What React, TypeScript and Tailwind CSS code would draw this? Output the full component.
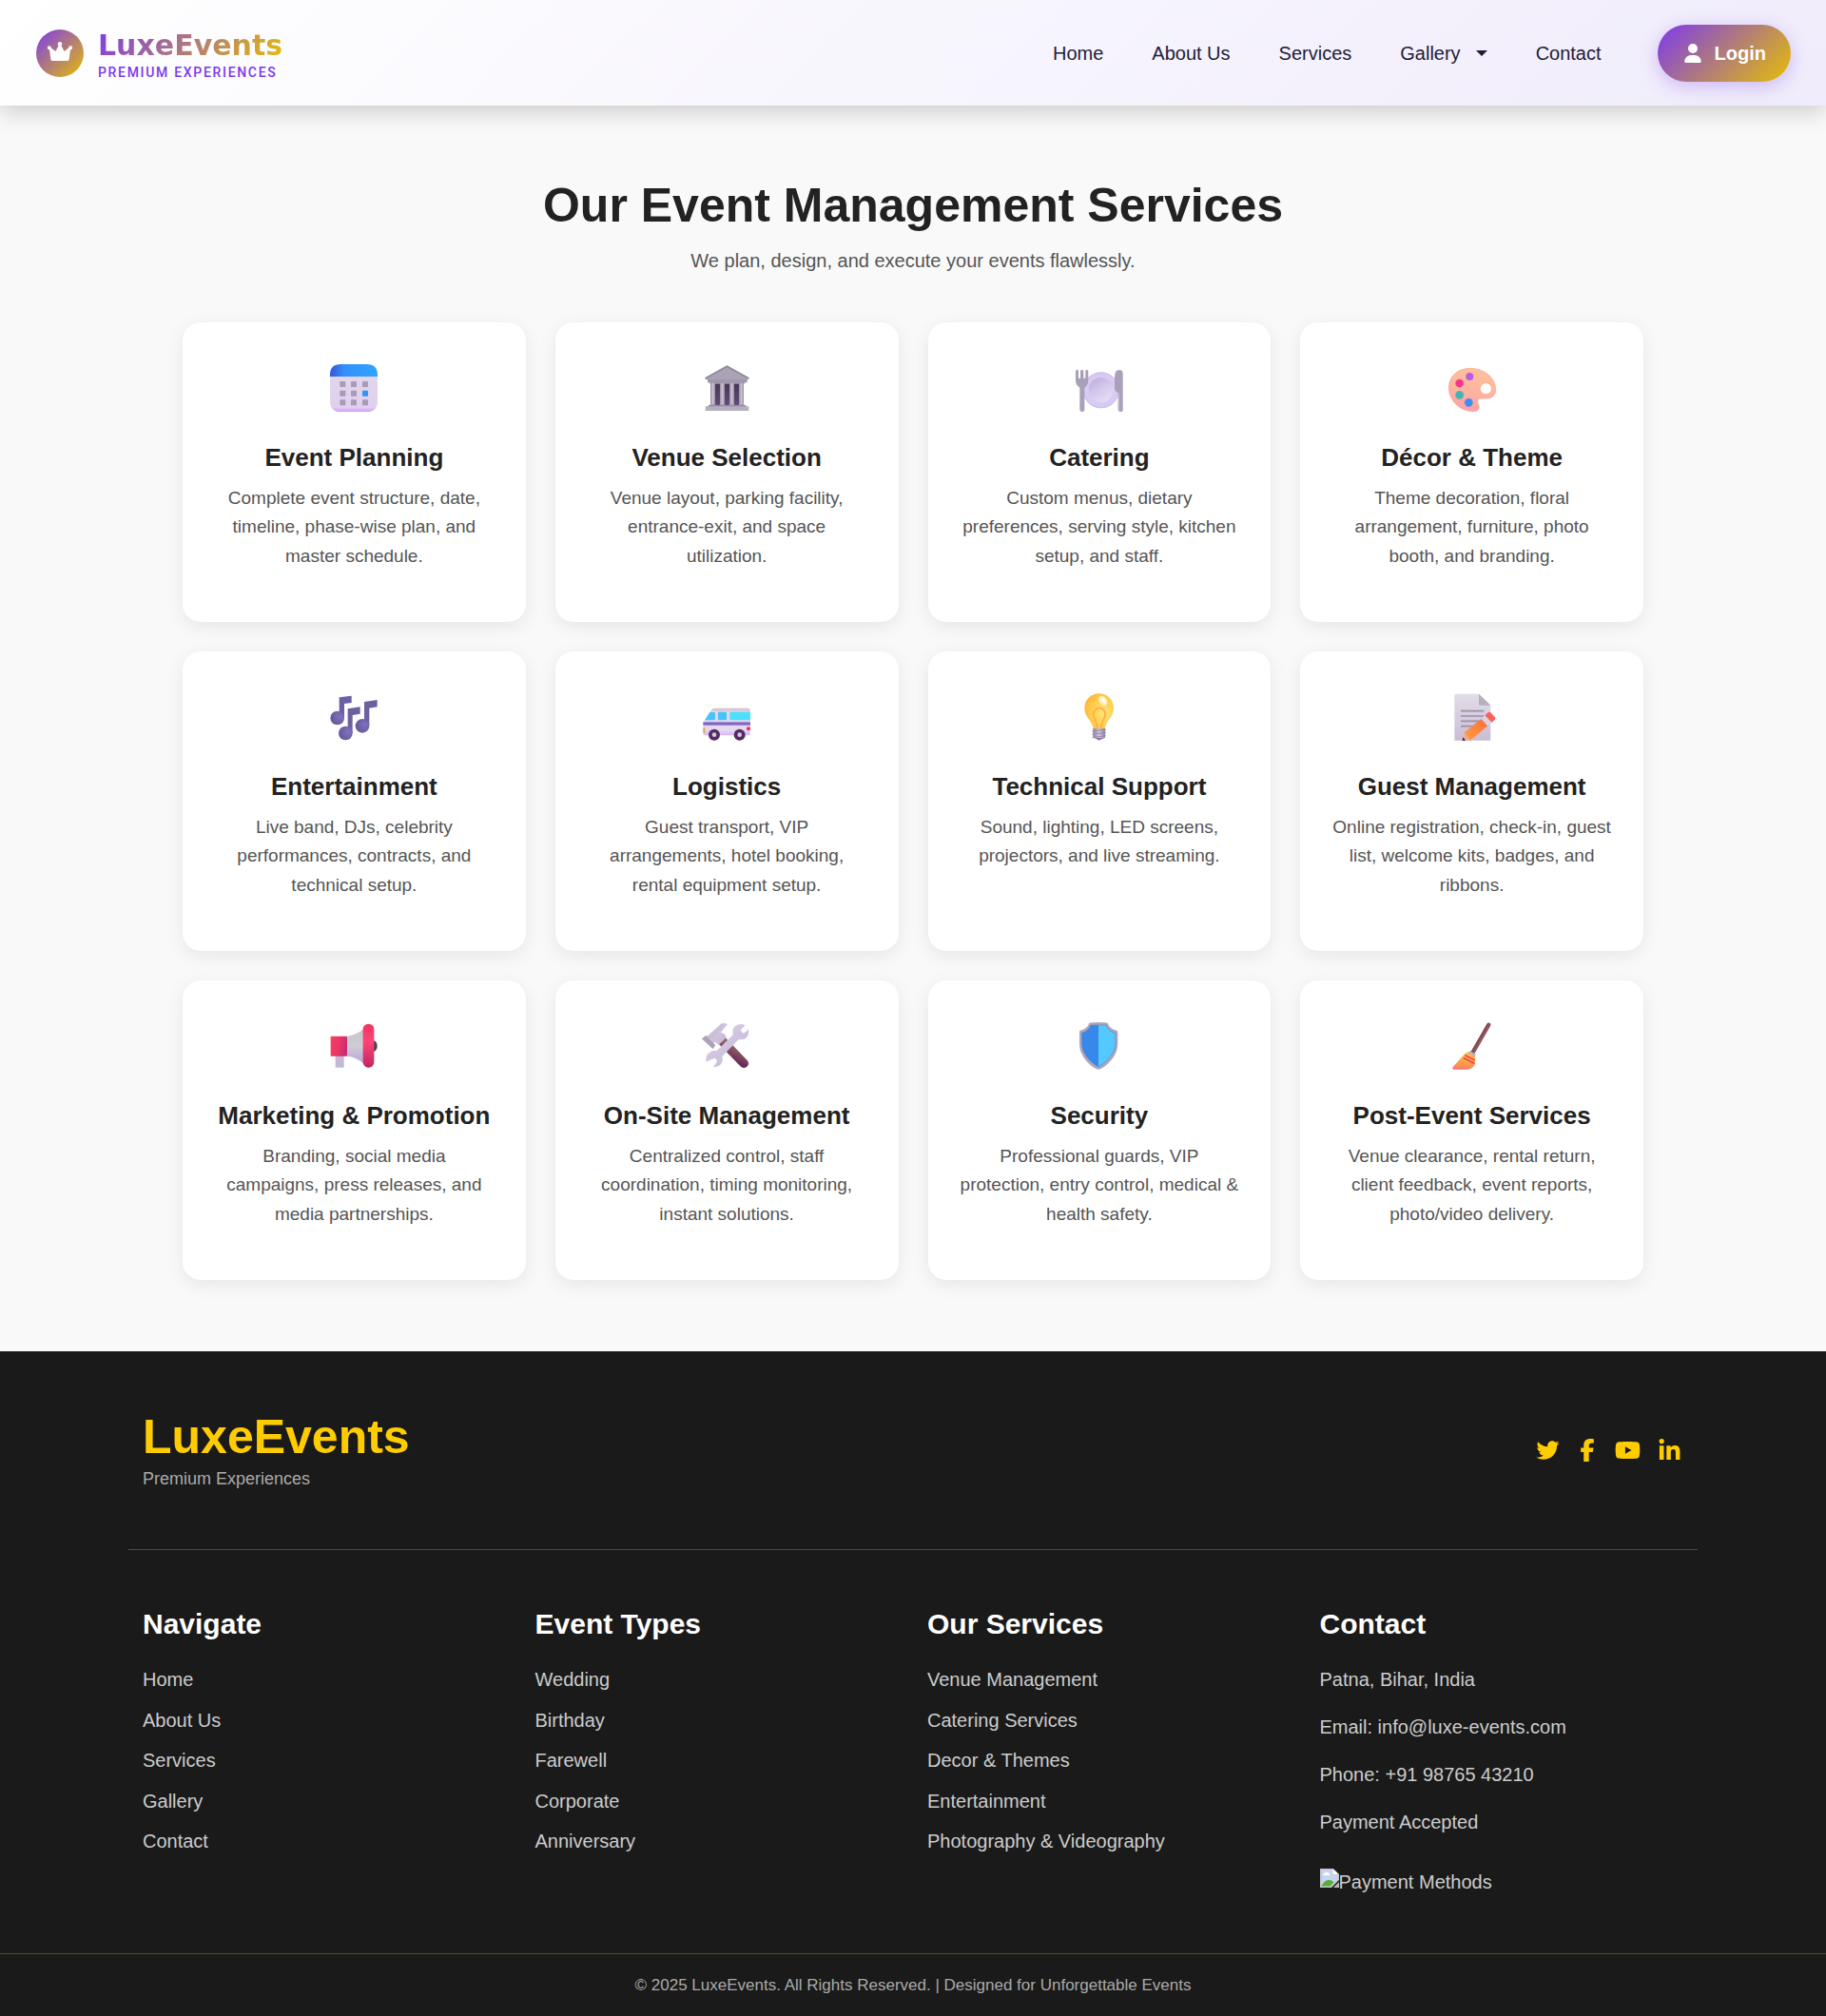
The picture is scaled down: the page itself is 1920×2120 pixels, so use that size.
import React from "react";
import { FaFacebookF, FaLinkedinIn, FaTwitter, FaYoutube, FaUser } from "react-icons/fa6";

type IconProps = { children: React.ReactNode };

function Emoji({ children }: IconProps) {
  return (
    <svg viewBox="0 0 150 150" className="block size-[50px] overflow-visible" aria-hidden="true">
      {children}
    </svg>
  );
}

function CalendarIcon() {
  const xs = [31, 66, 102];
  const ys = [54, 83, 112];
  return (
    <Emoji>
      <defs>
        <linearGradient id="cal-top" x1="0" y1="0" x2="1" y2="0">
          <stop offset="0" stopColor="#3556d6" />
          <stop offset="0.3" stopColor="#3390fb" />
          <stop offset="1" stopColor="#2ea5ff" />
        </linearGradient>
        <linearGradient id="cal-body" x1="0" y1="0" x2="0" y2="1">
          <stop offset="0" stopColor="#e0d6ea" />
          <stop offset="0.88" stopColor="#e0d0f0" />
          <stop offset="1" stopColor="#cf9cf5" />
        </linearGradient>
      </defs>
      <path d="M0 36H150V116Q150 150 116 150H34Q0 150 0 116Z" fill="url(#cal-body)" />
      <path d="M0 39V34Q0 0 34 0H116Q150 0 150 34V39Z" fill="url(#cal-top)" />
      {ys.map((y, r) =>
        xs.map((x, c) => (
          <rect key={`${r}-${c}`} x={x} y={y} width="18" height="18" rx="2" fill={r === 1 && c === 2 ? "#2f94f5" : "#a79bb5"} />
        )),
      )}
    </Emoji>
  );
}

function MuseumIcon() {
  return (
    <Emoji>
      <defs>
        <linearGradient id="mus-col" x1="0" y1="0" x2="1" y2="0">
          <stop offset="0" stopColor="#978da3" />
          <stop offset="0.5" stopColor="#c9c2d2" />
          <stop offset="1" stopColor="#978da3" />
        </linearGradient>
        <linearGradient id="mus-dark" x1="0" y1="0" x2="0" y2="1">
          <stop offset="0" stopColor="#43384f" />
          <stop offset="1" stopColor="#654a7c" />
        </linearGradient>
      </defs>
      <rect x="26" y="56" width="102" height="76" fill="url(#mus-dark)" />
      <path d="M76 4L145 42V48H8V42Z" fill="#aaa3b4" />
      <path d="M76 4L145 42V48L76 10L8 48V42Z" fill="#948a9f" />
      <path d="M15 48H140V58H132V62H22V58H15Z" fill="#a097ac" />
      {[24, 54, 84, 114].map((x) => (
        <g key={x}>
          <rect x={x} y="60" width="15" height="70" fill="url(#mus-col)" />
          <rect x={x - 1} y="126" width="17" height="5" fill="#a8a0b3" />
        </g>
      ))}
      <rect x="17" y="129" width="119" height="6" fill="#938a9f" />
      <rect x="8" y="133" width="137" height="14" rx="1" fill="#b4aebf" />
    </Emoji>
  );
}

function PlateIcon() {
  return (
    <Emoji>
      <defs>
        <linearGradient id="pl-in" x1="0.2" y1="0" x2="0.8" y2="1">
          <stop offset="0" stopColor="#c0aee0" />
          <stop offset="0.5" stopColor="#d6c9ee" />
          <stop offset="1" stopColor="#e6e0f2" />
        </linearGradient>
      </defs>
      <circle cx="80" cy="82" r="57" fill="#d8cbf3" />
      <circle cx="80" cy="82" r="55" fill="none" stroke="#cdbcec" strokeWidth="3" />
      <circle cx="80" cy="81" r="39" fill="url(#pl-in)" />
      <path
        d="M3 18Q9 16 9 22V44H15V22Q15 18 20 18Q25 18 25 22V44H31V22Q31 16 37 18Q40 19 40 24V52Q40 66 28 74V143Q28 150 20 150Q13 150 13 143V74Q0 66 0 52V22Q0 19 3 18Z"
        fill="#aaa0b9"
      />
      <path d="M149 146Q149 150 142 150Q134 150 134 144V90Q123 86 123 76V40Q123 18 138 18Q149 18 149 30Z" fill="#aaa0b9" />
      <path d="M134 90V144Q134 148 138 149V90Z" fill="#c2bacd" />
    </Emoji>
  );
}

function PaletteIcon() {
  return (
    <Emoji>
      <defs>
        <linearGradient id="pa" x1="0.6" y1="0" x2="0.4" y2="1">
          <stop offset="0" stopColor="#ffc09a" />
          <stop offset="0.5" stopColor="#fdb5a0" />
          <stop offset="1" stopColor="#ff9fa5" />
        </linearGradient>
      </defs>
      <path
        fillRule="evenodd"
        d="M68 13C112 13 149 42 149 80C149 98 138 108 118 108H104C91 108 89 116 95 127C100 138 95 149 80 149C36 149 1 114 1 74C1 38 30 13 68 13ZM118 59a18 18 0 1 0 0.1 0Z"
        fill="url(#pa)"
        stroke="#fba58e"
        strokeWidth="2"
      />
      <circle cx="67" cy="39" r="12" fill="#b95be8" />
      <circle cx="35" cy="60" r="13" fill="#f5368c" />
      <circle cx="35" cy="97" r="13" fill="#43b5b4" />
      <circle cx="64" cy="121" r="13" fill="#428cf5" />
    </Emoji>
  );
}

function NotesIcon() {
  return (
    <Emoji>
      <defs>
        <radialGradient id="note" cx="0.7" cy="0.4" r="0.7">
          <stop offset="0" stopColor="#8270c0" />
          <stop offset="1" stopColor="#665998" />
        </radialGradient>
      </defs>
      <g fill="#6d60a0">
        <path d="M29 13L68 8V30L45 33V78H29Z" />
        <path d="M56 49L95 43V65L71 69V126H56Z" />
        <path d="M108 27L149 21V43L124 47V103H108Z" />
      </g>
      <g fill="url(#note)">
        <circle cx="23" cy="78" r="22" />
        <circle cx="49" cy="126" r="22" />
        <circle cx="102" cy="103" r="22" />
      </g>
    </Emoji>
  );
}

function VanIcon() {
  return (
    <Emoji>
      <defs>
        <linearGradient id="van" x1="0" y1="0" x2="0" y2="1">
          <stop offset="0" stopColor="#c9bfcf" />
          <stop offset="0.15" stopColor="#e2d8e8" />
          <stop offset="0.8" stopColor="#e5d9f0" />
          <stop offset="1" stopColor="#d5b6f2" />
        </linearGradient>
      </defs>
      <path d="M36 47H140Q150 47 150 57V126Q150 133 142 133H8Q1 133 1 126V94L27 53Q31 47 36 47Z" fill="url(#van)" />
      <path d="M22 60H35Q39 60 39 64V81Q39 85 35 85H6Z" fill="#45c3fb" />
      <rect x="48" y="59" width="27" height="26" rx="4" fill="#45c3fb" />
      <path d="M89 59H150V85H89Q85 85 85 81V63Q85 59 89 59Z" fill="#4be0ff" />
      <rect x="1" y="91" width="149" height="10" fill="#8467c4" />
      <rect x="1" y="108" width="6" height="17" rx="3" fill="#e5a93c" />
      <circle cx="144" cy="112" r="6" fill="#f0265f" />
      {[36, 116].map((x) => (
        <g key={x}>
          <circle cx={x} cy="131" r="18" fill="#532a63" />
          <circle cx={x} cy="131" r="7" fill="#d6c9de" />
        </g>
      ))}
    </Emoji>
  );
}

function BulbIcon() {
  return (
    <Emoji>
      <defs>
        <radialGradient id="bulb" cx="0.65" cy="0.55" r="0.65">
          <stop offset="0" stopColor="#ffe477" />
          <stop offset="0.6" stopColor="#ffcf4d" />
          <stop offset="1" stopColor="#ffb73c" />
        </radialGradient>
        <radialGradient id="bulb-shine" cx="0.6" cy="0.5" r="0.6">
          <stop offset="0" stopColor="#ffffff" />
          <stop offset="1" stopColor="#ffe7a0" />
        </radialGradient>
        <linearGradient id="bulb-base" x1="0" y1="0" x2="1" y2="0">
          <stop offset="0" stopColor="#8e7ca0" />
          <stop offset="0.5" stopColor="#d3cadc" />
          <stop offset="1" stopColor="#8e7ca0" />
        </linearGradient>
      </defs>
      <path d="M74 1C100 1 120 21 120 47C120 76 96 84 92 112H56C52 84 28 76 28 47C28 21 48 1 74 1Z" fill="url(#bulb)" />
      <path d="M68 111Q68 92 60 80Q52 67 60 55Q67 46 75 46Q83 46 90 55Q97 67 89 80Q81 92 81 111" fill="none" stroke="#ffac4c" strokeWidth="5" />
      <ellipse cx="86" cy="24" rx="12" ry="17" transform="rotate(-35 86 24)" fill="url(#bulb-shine)" />
      <rect x="55" y="111" width="38" height="30" fill="url(#bulb-base)" />
      <path d="M52 120L96 114M52 130L96 124M53 140L95 134" stroke="#998bab" strokeWidth="3" />
      <path d="M57 141H90L84 145H80V148H68V145Z" fill="#8b74b0" />
    </Emoji>
  );
}

function MemoIcon() {
  return (
    <Emoji>
      <defs>
        <linearGradient id="memo" x1="0" y1="0" x2="0" y2="1">
          <stop offset="0" stopColor="#e3dce9" />
          <stop offset="1" stopColor="#cabdd6" />
        </linearGradient>
        <linearGradient id="pencil" x1="0" y1="1" x2="1" y2="0">
          <stop offset="0" stopColor="#ff9f42" />
          <stop offset="1" stopColor="#fb6f3c" />
        </linearGradient>
      </defs>
      <path d="M22 2H96L133 38V146Q133 149 130 149H22Q19 149 19 146V5Q19 2 22 2Z" fill="url(#memo)" />
      <path d="M96 2L133 38H99Q96 38 96 35Z" fill="#b7afbd" />
      <path d="M39 56H112M39 72H112M39 88H112M39 104H90" stroke="#9a90a3" strokeWidth="5" />
      <path d="M104 80L124 103L69 149L50 124Z" fill="url(#pencil)" />
      <path d="M50 124L69 149H44Z" fill="#eab08f" />
      <path d="M46 139L54 149H43Z" fill="#4a2146" />
      <path d="M115 70L137 92L124 103L103 81Z" fill="#d9d3e6" />
      <path d="M115 70L125 61Q129 57 133 61L147 76Q150 80 146 84L137 92Z" fill="#fb6153" />
    </Emoji>
  );
}

function MegaphoneIcon() {
  return (
    <Emoji>
      <defs>
        <linearGradient id="meg-box" x1="0" y1="0" x2="1" y2="0.3">
          <stop offset="0" stopColor="#f74060" />
          <stop offset="0.6" stopColor="#ea3567" />
          <stop offset="1" stopColor="#c92e72" />
        </linearGradient>
        <linearGradient id="meg-cone" x1="0" y1="0" x2="0" y2="1">
          <stop offset="0" stopColor="#c6c5c9" />
          <stop offset="0.5" stopColor="#cfccd5" />
          <stop offset="1" stopColor="#b9a4db" />
        </linearGradient>
        <linearGradient id="meg-rim" x1="0" y1="0" x2="0" y2="1">
          <stop offset="0" stopColor="#f23360" />
          <stop offset="0.4" stopColor="#fb4677" />
          <stop offset="1" stopColor="#c22560" />
        </linearGradient>
      </defs>
      <path d="M17 104H44V143H17Z" fill="#c3b8d6" />
      <path d="M54 44Q84 40 106 20V130Q84 110 54 107Z" fill="url(#meg-cone)" />
      <ellipse cx="138" cy="75" rx="11" ry="17" fill="#4d4257" />
      <rect x="2" y="44" width="52" height="63" rx="2" fill="url(#meg-box)" />
      <rect x="104" y="5" width="35" height="138" rx="17" fill="url(#meg-rim)" />
    </Emoji>
  );
}

function ToolsIcon() {
  return (
    <Emoji>
      <defs>
        <linearGradient id="handle" x1="0.6" y1="0.3" x2="0.4" y2="0.7">
          <stop offset="0" stopColor="#92675f" />
          <stop offset="1" stopColor="#6d2b5c" />
        </linearGradient>
        <linearGradient id="steel" x1="0" y1="0" x2="1" y2="1">
          <stop offset="0" stopColor="#dcd7e2" />
          <stop offset="1" stopColor="#c3b2dc" />
        </linearGradient>
      </defs>
      <path d="M70 47L140 120Q148 129 141 138Q132 149 120 140L48 66Z" fill="url(#handle)" />
      <path d="M60 3Q68 1 78 6L57 32Q72 35 73 46Q66 60 49 71Q43 62 35 63L34 84L-3 52L13 44Z" fill="url(#steel)" />
      <path d="M-3 52L10 41L40 73L31 84Z" fill="#aca2b9" />
      <path d="M17 46L58 5L68 6L32 55Z" fill="#c8c0d6" />
      <path
        d="M107 9Q124 3 134 10L121 22Q119 28 124 32Q128 35 133 32L144 22Q147 36 139 47Q128 57 113 54L61 108Q65 120 57 132Q48 142 33 141L44 126Q45 119 40 115Q34 112 29 116L11 125Q6 109 17 98Q29 86 44 90L95 40Q90 18 107 9Z"
        fill="url(#steel)"
      />
    </Emoji>
  );
}

function ShieldIcon() {
  return (
    <Emoji>
      <path d="M43 2Q46 0 72 0Q98 0 101 2C105 15 117 23 130 26Q133 28 133 32V68C133 104 104 134 77 148Q72 150 67 148C40 134 12 104 12 68V32Q12 28 14 26C27 23 39 15 43 2Z" fill="#aea5bb" />
      <path d="M72 9H48C44 22 33 30 20 34V68C20 98 46 126 72 140Z" fill="#3888ec" />
      <path d="M72 9H96C100 22 111 30 125 34V68C125 98 98 126 72 140Z" fill="#54c8ff" />
      <path d="M48 9C44 22 33 30 20 34V68C20 98 46 126 72 140C98 126 125 98 125 68V34C111 30 100 22 96 9Z" fill="none" stroke="#2f84d8" strokeOpacity="0.5" strokeWidth="3" />
    </Emoji>
  );
}

function BroomIcon() {
  return (
    <Emoji>
      <defs>
        <linearGradient id="broom" x1="0.5" y1="0" x2="0.4" y2="1">
          <stop offset="0" stopColor="#ffbd46" />
          <stop offset="0.7" stopColor="#fb9b45" />
          <stop offset="1" stopColor="#ff7080" />
        </linearGradient>
      </defs>
      <path d="M127 8L77 95" stroke="#80494f" strokeWidth="13" strokeLinecap="round" />
      <path d="M129 9L79 96" stroke="#9c5e63" strokeWidth="4" strokeLinecap="round" />
      <path d="M52 99Q60 94 67 95L84 105V132Q77 147 60 149H15Q10 146 16 139Z" fill="url(#broom)" />
      <path d="M66 90L86 100L83 107L62 96Z" fill="#b9aec9" />
      <path d="M52 104L84 120M47 112L82 130" stroke="#ef3158" strokeWidth="4" />
    </Emoji>
  );
}

function CrownIcon() {
  return (
    <svg viewBox="0 0 26 20" className="mb-1 h-5 w-[26px]" fill="#fff" aria-hidden="true">
      <path d="M5 20Q3.600 20 3.400 18.600L2 8.200A2 2 0 1 1 3.800 6.400L8.400 10L11.600 4A2.200 2.200 0 1 1 14.400 4L17.600 10L22.200 6.400A2 2 0 1 1 24 8.200L22.600 18.600Q22.400 20 21 20Z" />
    </svg>
  );
}

function BrokenImageIcon() {
  return (
    <svg viewBox="0 0 20 20" className="mb-2 size-5 shrink-0" aria-hidden="true">
      <path d="M0 0H14L20 6V12L12 20H0Z" fill="#c6c6c6" />
      <path d="M1.500 1.500H13V7H18.500V11.500L11 18.500H1.500Z" fill="#c4d6f5" />
      <path d="M3 7Q3 5 5 5Q6 3 8 4Q10 4 10 7Z" fill="#fff" />
      <path d="M1.500 18.500Q5 11 10 12Q13 12 14.500 14.500L10.500 18.500Z" fill="#5aac35" />
      <path d="M13.500 0.500V6H19.500Z" fill="#fff" />
      <path d="M20 14V20H14Z" fill="#b9b9b9" />
    </svg>
  );
}

const services = [
  { icon: CalendarIcon, title: "Event Planning", text: "Complete event structure, date, timeline, phase-wise plan, and master schedule." },
  { icon: MuseumIcon, title: "Venue Selection", text: "Venue layout, parking facility, entrance-exit, and space utilization." },
  { icon: PlateIcon, title: "Catering", text: "Custom menus, dietary preferences, serving style, kitchen setup, and staff." },
  { icon: PaletteIcon, title: "Décor & Theme", text: "Theme decoration, floral arrangement, furniture, photo booth, and branding." },
  { icon: NotesIcon, title: "Entertainment", text: "Live band, DJs, celebrity performances, contracts, and technical setup." },
  { icon: VanIcon, title: "Logistics", text: "Guest transport, VIP arrangements, hotel booking, rental equipment setup." },
  { icon: BulbIcon, title: "Technical Support", text: "Sound, lighting, LED screens, projectors, and live streaming." },
  { icon: MemoIcon, title: "Guest Management", text: "Online registration, check-in, guest list, welcome kits, badges, and ribbons." },
  { icon: MegaphoneIcon, title: "Marketing & Promotion", text: "Branding, social media campaigns, press releases, and media partnerships." },
  { icon: ToolsIcon, title: "On-Site Management", text: "Centralized control, staff coordination, timing monitoring, instant solutions." },
  { icon: ShieldIcon, title: "Security", text: "Professional guards, VIP protection, entry control, medical & health safety." },
  { icon: BroomIcon, title: "Post-Event Services", text: "Venue clearance, rental return, client feedback, event reports, photo/video delivery." },
];

const footerColumns = [
  { title: "Navigate", links: ["Home", "About Us", "Services", "Gallery", "Contact"] },
  { title: "Event Types", links: ["Wedding", "Birthday", "Farewell", "Corporate", "Anniversary"] },
  { title: "Our Services", links: ["Venue Management", "Catering Services", "Decor & Themes", "Entertainment", "Photography & Videography"] },
];

function Header() {
  return (
    <header className="relative flex items-center justify-between bg-linear-[135deg,#ffffff,#f0ecfb] pt-[26px] pr-[37px] pb-[25px] pl-[38px] shadow-[0_5px_25px_rgba(0,0,0,0.2)]">
      <a href="#home" className="flex items-center gap-[15px]">
        <span className="flex size-[50px] items-center justify-center rounded-full bg-linear-[135deg,#7c3aed,#e6be05]">
          <CrownIcon />
        </span>
        <span className="flex flex-col pt-1">
          <span className="bg-linear-[135deg,#7c3aed,#e6be05] bg-clip-text font-['Arial_Black','DejaVu_Sans',sans-serif] text-3xl leading-9 font-bold text-transparent">
            LuxeEvents
          </span>
          <span className="font-['Roboto',sans-serif] text-sm leading-5 font-medium tracking-[0.12em] text-[#7c3aed]">PREMIUM EXPERIENCES</span>
        </span>
      </a>
      <nav className="flex items-center gap-[51px] text-xl text-[#1e1b3a]">
        <a href="#home">Home</a>
        <a href="#about">About Us</a>
        <a href="#services">Services</a>
        <a href="#gallery" className="flex items-center gap-4">
          Gallery
          <svg viewBox="0 0 12 6" className="h-[6px] w-3" fill="currentColor" aria-hidden="true">
            <path d="M0 0H12L6 6Z" />
          </svg>
        </a>
        <a href="#contact">Contact</a>
        <button type="button" className="ml-2 flex h-[60px] items-center gap-[14px] rounded-full bg-linear-[135deg,#7c3aed,#e6be05] pr-[26px] pl-7 font-bold text-white shadow-[0_5px_19px_rgba(124,58,237,0.3)]">
          <FaUser className="h-5 w-[18px]" />
          Login
        </button>
      </nav>
    </header>
  );
}

function Footer() {
  return (
    <footer className="bg-[#1a1a1a] text-xl text-[#cccccc]">
      <div className="mx-auto max-w-[1650px]">
        <div className="flex items-center justify-between border-b border-[#5f4d14] pt-[60px] pr-[18px] pb-[60px] pl-[15px]">
          <div>
            <h2 className="text-[50px] leading-[60px] font-bold text-[#ffcc00]">LuxeEvents</h2>
            <p className="text-lg leading-7 text-[#aaaaaa]">Premium Experiences</p>
          </div>
          <div className="flex items-center gap-[19px] text-[#ffcc00]">
            <a href="#twitter" aria-label="Twitter"><FaTwitter className="h-6 w-[25px]" /></a>
            <a href="#facebook" aria-label="Facebook"><FaFacebookF className="h-6 w-5" /></a>
            <a href="#youtube" aria-label="YouTube"><FaYoutube className="h-6 w-[27px]" /></a>
            <a href="#linkedin" aria-label="LinkedIn"><FaLinkedinIn className="h-[25px] w-[23px]" /></a>
          </div>
        </div>
        <div className="grid grid-cols-4 py-[60px]">
          {footerColumns.map((col) => (
            <div key={col.title} className="px-[15px]">
              <h3 className="mb-[25px] text-3xl leading-9 font-bold text-white">{col.title}</h3>
              <ul className="flex flex-col gap-[0.625em]">
                {col.links.map((link) => (
                  <li key={link} className="leading-[30px]">
                    <a href="#link">{link}</a>
                  </li>
                ))}
              </ul>
            </div>
          ))}
          <div className="px-[15px]">
            <h3 className="mb-[25px] text-3xl leading-9 font-bold text-white">Contact</h3>
            <div className="flex flex-col gap-5 leading-[30px]">
              <p>Patna, Bihar, India</p>
              <p>Email: info@luxe-events.com</p>
              <p>Phone: +91 98765 43210</p>
              <p>Payment Accepted</p>
              <div className="mt-[13px] flex items-center">
                <BrokenImageIcon />
                Payment Methods
              </div>
            </div>
          </div>
        </div>
      </div>
      <div className="border-t border-[#5f4d14] pt-[21px] pb-5 text-center text-[17px] leading-6 text-[#aaaaaa]">
        © 2025 LuxeEvents. All Rights Reserved. | Designed for Unforgettable Events
      </div>
    </footer>
  );
}

export default function App() {
  return (
    <div className="bg-[#f9f9f9] font-['Liberation_Sans',Arial,sans-serif] text-[#222222]">
      <Header />
      <main className="mx-auto w-4/5 pt-[75px] pb-[75px] text-center">
        <h1 className="text-[50px] leading-[60px] font-bold">Our Event Management Services</h1>
        <p className="mt-[13px] mb-[50px] text-xl leading-[30px] text-[#555555]">We plan, design, and execute your events flawlessly.</p>
        <div className="grid grid-cols-4 gap-[31px]">
          {services.map(({ icon: Icon, title, text }) => (
            <article key={title} className="flex min-h-[315px] flex-col items-center rounded-[19px] bg-white px-[31px] py-11 shadow-[0_5px_19px_rgba(0,0,0,0.08)]">
              <Icon />
              <h2 className="mt-8 text-[26px] leading-8 font-bold whitespace-nowrap">{title}</h2>
              <p className="mt-3 max-w-[294px] text-[19px] leading-[1.6] text-[#555555]">{text}</p>
            </article>
          ))}
        </div>
      </main>
      <Footer />
    </div>
  );
}
